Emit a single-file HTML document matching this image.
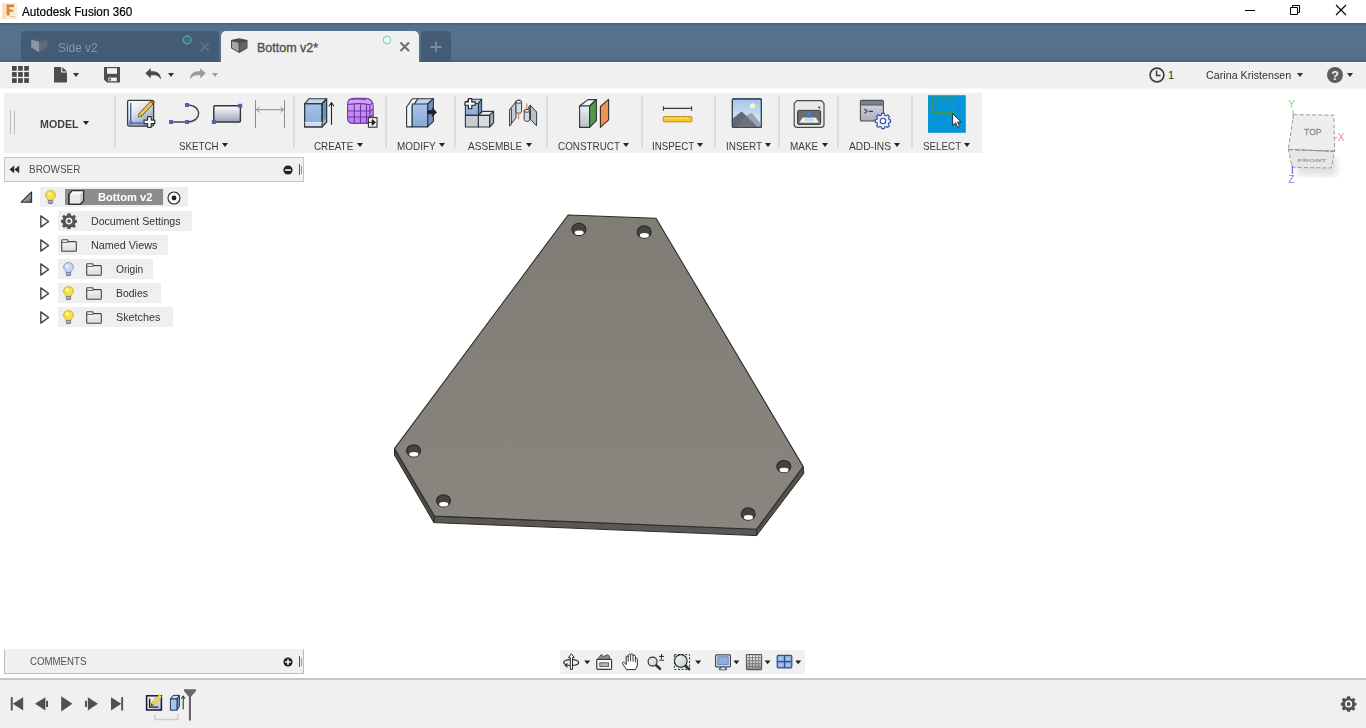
<!DOCTYPE html>
<html>
<head>
<meta charset="utf-8">
<title>Autodesk Fusion 360</title>
<style>
*{box-sizing:border-box;margin:0;padding:0}
html,body{width:1366px;height:728px;overflow:hidden;background:#fff;font-family:"Liberation Sans",sans-serif;}
.abs{position:absolute}
#titlebar{position:absolute;left:0;top:0;width:1366px;height:23px;background:#fff}
#titletext{-webkit-text-stroke:0.2px #000;position:absolute;left:22px;top:5px;font-size:12px;transform:scaleX(.978);transform-origin:0 0;line-height:15px;color:#000;white-space:nowrap}
#tabbar{z-index:2;position:absolute;left:0;top:23px;width:1366px;height:39px;background:linear-gradient(#4b6078 0,#4b6078 1px,#55718d 2px,#56728e 20px,#526e89 37px,#4a6079 38px,#4a6079 39px)}
#tab1{position:absolute;left:21px;top:8px;width:198px;height:31px;background:#435b74;border-radius:4px 4px 0 0}
#tab2{position:absolute;left:221px;top:8px;width:198px;height:32px;background:#f0f0f0;border-radius:5px 5px 0 0}
#tabplus{position:absolute;left:421px;top:8px;width:30px;height:31px;background:#435b74;border-radius:4px 4px 0 0}
.tabtxt{position:absolute;top:10px;font-size:12.5px;line-height:15px;white-space:nowrap}
.qtxt{position:absolute;top:6.5px;font-size:11px;line-height:13px;color:#333;white-space:nowrap}
#qat{position:absolute;left:0;top:62px;width:1366px;height:27px;background:linear-gradient(#f8fafc 0,#f8fafc 1px,#f0f0f0 1px,#f0f0f0 26px,#f7f7f7 26px)}
#ribbon{position:absolute;left:4px;top:93px;width:978px;height:60px;background:#f0f0f0}
.sep{position:absolute;top:3px;width:2px;height:52px;background:#dddddd}
.rlabel{position:absolute;top:46.7px;font-size:11px;line-height:13px;color:#3c3c3c;white-space:nowrap}
.dd{position:absolute;width:0;height:0;border-left:3.5px solid transparent;border-right:3.5px solid transparent;border-top:4px solid #222}
#browserhdr{position:absolute;left:4px;top:157px;width:300px;height:25px;background:#f0f0f0;border:1px solid #c4c4c4}
.ptitle{position:absolute;font-size:11px;line-height:13px;color:#505050;white-space:nowrap}
.row{position:absolute;height:20px;background:#efeff1}
.rtxt{position:absolute;font-size:11px;line-height:13px;color:#333;white-space:nowrap}
#comments{position:absolute;left:4px;top:649px;width:300px;height:25px;background:#f0f0f0;border:1px solid #bcbcbc;border-top-color:#f0f0f0}
#navbar{position:absolute;left:560px;top:650px;width:245px;height:24px;background:#f0f0f0}
#botline{position:absolute;left:0;top:678px;width:1366px;height:2px;background:#c6c6c6}
#timeline{position:absolute;left:0;top:680px;width:1366px;height:48px;background:#f0f0f0}
svg{position:absolute;overflow:visible}
</style>
</head>
<body>
<div id="titlebar">
  <svg style="left:2px;top:3px" width="15" height="16" viewBox="0 0 15 16">
    <rect x="0" y="0" width="15" height="16" rx="1.5" fill="#fdebd9"/>
    <rect x="0" y="0" width="4" height="16" fill="#fbd9b8" opacity=".7"/>
    <path d="M4.6 1.8 H12 V4.3 H7.6 V6.4 H11.2 V8.8 H7.6 V12.4 H4.6 Z" fill="#d98a35"/>
    <path d="M4.6 1.8 H12 V3 H4.6 Z" fill="#c9792a"/>
    <rect x="8" y="13.2" width="5" height="1" fill="#e8b98a"/>
  </svg>
  <div id="titletext">Autodesk Fusion 360</div>
  <svg style="left:1240px;top:0" width="120" height="23" viewBox="0 0 120 23">
    <path d="M5 10.5 H15" stroke="#000" stroke-width="1" fill="none"/>
    <path d="M50.5 7.5 H57.5 V14.5 H50.5 Z M52.5 7.5 V5.5 H59.5 V12.5 H57.5" stroke="#000" stroke-width="1" fill="none"/>
    <path d="M96 5 L106 15 M106 5 L96 15" stroke="#000" stroke-width="1.1" fill="none"/>
  </svg>
</div>
<div id="tabbar">
  <div id="tab1">
    <svg style="left:10px;top:6px" width="17" height="16" viewBox="0 0 17 16">
      <path d="M0.2 2.6 L8 4.6 L8 15.2 L0.2 10.6 Z" fill="#8797a7"/>
      <path d="M8 4.6 L16.3 2.4 L16.3 10.4 L8 15.2 Z" fill="#5b6a7c"/>
      <path d="M0.2 2.6 L8 1 L16.3 2.4 L8 4.6 Z" fill="#4c5f75"/>
    </svg>
    <div class="tabtxt" style="left:36.5px;color:#8399ad;transform:scaleX(.95);transform-origin:0 0">Side v2</div>
    <svg style="left:160px;top:3px" width="12" height="12" viewBox="0 0 12 12"><circle cx="6.1" cy="5.9" r="3.8" fill="#2f6e7a" stroke="#5b9ca2" stroke-width="1.5"/><circle cx="6.1" cy="5.9" r="0.9" fill="#3f7f88"/></svg>
    <svg style="left:178px;top:10px" width="12" height="12" viewBox="0 0 12 12"><path d="M1.5 1.5 L10 10 M10 1.5 L1.5 10" stroke="#5d7084" stroke-width="2.2" fill="none"/></svg>
  </div>
  <div id="tab2">
    <svg style="left:9.8px;top:6.5px" width="17" height="16" viewBox="0 0 17 16">
      <path d="M0 2 L8 0.3 L16.5 2 L16.5 10.2 L8.3 15 L0 10.2 Z" fill="#4c4c4c"/>
      <path d="M1 3.4 L7.6 4.8 L7.6 13.4 L1 9.7 Z" fill="#a6a6a6"/>
      <path d="M8.8 4.9 L15.6 3.4 L15.6 9.7 L8.8 13.5 Z" fill="#646464"/>
    </svg>
    <div class="tabtxt" style="left:36px;color:#505050;-webkit-text-stroke:0.35px #505050">Bottom v2*</div>
    <svg style="left:160px;top:3px" width="12" height="12" viewBox="0 0 12 12"><circle cx="6" cy="6" r="3.6" fill="#f6fbfa" stroke="#7fd1c0" stroke-width="1.2"/></svg>
    <svg style="left:178px;top:10px" width="12" height="12" viewBox="0 0 12 12"><path d="M1.5 1.5 L10 10 M10 1.5 L1.5 10" stroke="#6c6c6c" stroke-width="2" fill="none"/></svg>
  </div>
  <div id="tabplus">
    <svg style="left:9px;top:10px" width="12" height="12" viewBox="0 0 12 12"><path d="M6 0.5 V11.5 M0.5 6 H11.5" stroke="#7a8da2" stroke-width="1.8" fill="none"/></svg>
  </div>
</div>
<div id="qat">
  <!-- grid -->
  <svg style="left:12px;top:4px" width="17" height="17" viewBox="0 0 17 17" fill="#484848">
    <rect x="0" y="0" width="4.7" height="4.7"/><rect x="6.1" y="0" width="4.7" height="4.7"/><rect x="12.2" y="0" width="4.7" height="4.7"/>
    <rect x="0" y="6.1" width="4.7" height="4.7"/><rect x="6.1" y="6.1" width="4.7" height="4.7"/><rect x="12.2" y="6.1" width="4.7" height="4.7"/>
    <rect x="0" y="12.2" width="4.7" height="4.7"/><rect x="6.1" y="12.2" width="4.7" height="4.7"/><rect x="12.2" y="12.2" width="4.7" height="4.7"/>
  </svg>
  <!-- file -->
  <svg style="left:54px;top:5px" width="13" height="16" viewBox="0 0 13 16"><path d="M0 0 H7.2 V5.6 H13 V15.6 H0 Z M8.4 0 L13 4.5 H8.4 Z" fill="#4d4d4d"/></svg>
  <div class="dd" style="left:73px;top:11px;border-top-color:#333"></div>
  <!-- save -->
  <svg style="left:104px;top:5px" width="16" height="16" viewBox="0 0 16 16">
    <path d="M0 0 H16 V15.6 H3 L0 12.8 Z" fill="#4d4d4d"/>
    <rect x="3" y="1.2" width="10" height="5.6" fill="#f0f0f0"/>
    <rect x="4.4" y="10.6" width="8.4" height="3.6" fill="#f0f0f0"/>
    <rect x="5.4" y="11.4" width="1.6" height="2.2" fill="#4d4d4d"/>
  </svg>
  <!-- undo -->
  <svg style="left:145px;top:6px" width="17" height="12" viewBox="0 0 17 12">
    <path d="M0.3 5.2 L5.8 0.2 V3.2 C10.5 3 15.6 4 15.9 11 L15.2 11 C14 7.6 10.5 7.2 5.8 7.3 V10.3 Z" fill="#4a4a4a"/>
  </svg>
  <div class="dd" style="left:168px;top:11px;border-top-color:#333"></div>
  <!-- redo -->
  <svg style="left:188.5px;top:6px" width="17" height="12" viewBox="0 0 17 12">
    <path d="M16.7 5.2 L11.2 0.2 V3.2 C6.5 3 1.4 4 1.1 11 L1.8 11 C3 7.6 6.5 7.2 11.2 7.3 V10.3 Z" fill="#9a9a9a"/>
  </svg>
  <div class="dd" style="left:212px;top:11px;border-top-color:#a0a0a0"></div>
  <!-- right side -->
  <svg style="left:1149px;top:4.5px" width="16" height="16" viewBox="0 0 16 16">
    <circle cx="8" cy="8" r="6.9" fill="none" stroke="#3c3c3c" stroke-width="1.6"/>
    <path d="M7.6 3.6 V8.6 H11.6" stroke="#3c3c3c" stroke-width="1.5" fill="none"/>
  </svg>
  <div class="qtxt" style="left:1168px">1</div>
  <div class="qtxt" style="left:1206px;transform:scaleX(.975);transform-origin:0 0">Carina Kristensen</div>
  <div class="dd" style="left:1297px;top:11px;border-top-color:#333;border-left-width:3px;border-right-width:3px"></div>
  <svg style="left:1327px;top:4.5px" width="16" height="16" viewBox="0 0 16 16">
    <circle cx="8" cy="8" r="8" fill="#5e5e5e"/>
    <text x="8" y="12.6" text-anchor="middle" font-family="Liberation Sans" font-weight="bold" font-size="12.5" fill="#f0f0f0">?</text>
  </svg>
  <div class="dd" style="left:1347px;top:11px;border-top-color:#333;border-left-width:3px;border-right-width:3px"></div>
</div>
<div id="ribbon">
  <div class="abs" style="left:6px;top:17px;width:1px;height:24px;background:#bdbdbd"></div><div class="abs" style="left:10px;top:17px;width:1px;height:24px;background:#bdbdbd"></div>
  <div class="abs" style="left:36.2px;top:24.7px;font-size:11px;line-height:13px;font-weight:bold;color:#404040;transform:scaleX(.97);transform-origin:0 0">MODEL</div>
  <div class="dd" style="left:79px;top:28.2px;border-left-width:3px;border-right-width:3px"></div>
  <div class="sep" style="left:110px"></div>
  <div class="sep" style="left:289px"></div>
  <div class="sep" style="left:381px"></div>
  <div class="sep" style="left:450px"></div>
  <div class="sep" style="left:542px"></div>
  <div class="sep" style="left:636.5px"></div>
  <div class="sep" style="left:710px"></div>
  <div class="sep" style="left:774px"></div>
  <div class="sep" style="left:833px"></div>
  <div class="sep" style="left:907px"></div>
  <div class="rlabel" style="left:175.4px;transform:scaleX(0.886);transform-origin:0 0">SKETCH</div>
  <div class="dd" style="left:218.0px;top:49.9px;border-left-width:3px;border-right-width:3px"></div>
  <div class="rlabel" style="left:310.0px;transform:scaleX(0.895);transform-origin:0 0">CREATE</div>
  <div class="dd" style="left:353.0px;top:49.9px;border-left-width:3px;border-right-width:3px"></div>
  <div class="rlabel" style="left:393.0px;transform:scaleX(0.902);transform-origin:0 0">MODIFY</div>
  <div class="dd" style="left:435.0px;top:49.9px;border-left-width:3px;border-right-width:3px"></div>
  <div class="rlabel" style="left:464.2px;transform:scaleX(0.916);transform-origin:0 0">ASSEMBLE</div>
  <div class="dd" style="left:522.0px;top:49.9px;border-left-width:3px;border-right-width:3px"></div>
  <div class="rlabel" style="left:554.0px;transform:scaleX(0.897);transform-origin:0 0">CONSTRUCT</div>
  <div class="dd" style="left:619.0px;top:49.9px;border-left-width:3px;border-right-width:3px"></div>
  <div class="rlabel" style="left:648.2px;transform:scaleX(0.887);transform-origin:0 0">INSPECT</div>
  <div class="dd" style="left:693.0px;top:49.9px;border-left-width:3px;border-right-width:3px"></div>
  <div class="rlabel" style="left:721.9px;transform:scaleX(0.900);transform-origin:0 0">INSERT</div>
  <div class="dd" style="left:760.5px;top:49.9px;border-left-width:3px;border-right-width:3px"></div>
  <div class="rlabel" style="left:786.3px;transform:scaleX(0.904);transform-origin:0 0">MAKE</div>
  <div class="dd" style="left:817.5px;top:49.9px;border-left-width:3px;border-right-width:3px"></div>
  <div class="rlabel" style="left:845.0px;transform:scaleX(0.929);transform-origin:0 0">ADD-INS</div>
  <div class="dd" style="left:889.5px;top:49.9px;border-left-width:3px;border-right-width:3px"></div>
  <div class="rlabel" style="left:919.2px;transform:scaleX(0.893);transform-origin:0 0">SELECT</div>
  <div class="dd" style="left:960.0px;top:49.9px;border-left-width:3px;border-right-width:3px"></div>
<svg style="left:-4px;top:-93px" width="990" height="160" viewBox="0 0 990 160">
<defs>
  <linearGradient id="gSk" x1="0" y1="0" x2="0.6" y2="1"><stop offset="0" stop-color="#ffffff"/><stop offset="0.45" stop-color="#e4e7ee"/><stop offset="1" stop-color="#8fa0c4"/></linearGradient>
  <linearGradient id="gRect" x1="0" y1="0" x2="0" y2="1"><stop offset="0" stop-color="#ffffff"/><stop offset="1" stop-color="#9aa1b8"/></linearGradient>
  <linearGradient id="gBlueF" x1="0" y1="0" x2="0" y2="1"><stop offset="0" stop-color="#a6c4e8"/><stop offset="1" stop-color="#86a9d6"/></linearGradient>
  <linearGradient id="gPurp" x1="0" y1="0" x2="0" y2="1"><stop offset="0" stop-color="#d7a6f5"/><stop offset="1" stop-color="#b77de8"/></linearGradient>
  <linearGradient id="gGrey" x1="0" y1="0" x2="0" y2="1"><stop offset="0" stop-color="#eef0f3"/><stop offset="1" stop-color="#b9bec8"/></linearGradient>
  <linearGradient id="gSky" x1="0" y1="0" x2="0" y2="1"><stop offset="0" stop-color="#9fc6ea"/><stop offset="1" stop-color="#e6f0f8"/></linearGradient>
  <linearGradient id="gTerm" x1="0" y1="0" x2="0" y2="1"><stop offset="0" stop-color="#d9dce6"/><stop offset="1" stop-color="#a9adbb"/></linearGradient>
</defs>
<!-- create sketch -->
<g>
  <rect x="127.6" y="100.3" width="26" height="25.8" rx="1.5" fill="url(#gSk)" stroke="#3a3a3a" stroke-width="1.3"/>
  <path d="M130.7 103 V123.2 H143" stroke="#3f5f9a" stroke-width="1.3" fill="none"/>
  <rect x="129.3" y="121.4" width="3.2" height="3.2" fill="#4d76c0"/>
  <path d="M139.2 113.6 L150.6 101.4 L153.2 103.8 L141.8 116 L138.6 116.8 Z" fill="#f2c74a" stroke="#5a4320" stroke-width="0.9"/>
  <path d="M150.6 101.4 L152 100 L154.6 102.4 L153.2 103.8 Z" fill="#b0662c" stroke="#5a4320" stroke-width="0.8"/>
  <path d="M139.2 113.6 L141.8 116 L138.4 117 Z" fill="#f4ead8" stroke="#5a4320" stroke-width="0.6"/>
  <path d="M147.6 116.6 H151.2 V120.1 H154.8 V123.7 H151.2 V127.3 H147.6 V123.7 H144 V120.1 H147.6 Z" fill="#fff" stroke="#333" stroke-width="1.2" stroke-linejoin="round"/>
</g>
<!-- line arc -->
<g>
  <path d="M171 122 H187 C202.5 122 202.5 105 187 105" stroke="#444" stroke-width="1.4" fill="none"/>
  <rect x="169" y="120" width="4" height="4" fill="#4d62b8"/><rect x="185" y="120" width="4" height="4" fill="#4d62b8"/><rect x="185" y="103" width="4" height="4" fill="#4d62b8"/>
</g>
<!-- rectangle -->
<g>
  <rect x="213.8" y="105.8" width="26.6" height="16.2" rx="1" fill="url(#gRect)" stroke="#333" stroke-width="1.4"/>
  <rect x="211.8" y="120" width="4" height="4" fill="#4d62b8"/><rect x="238.2" y="103.8" width="4" height="4" fill="#4d62b8"/>
</g>
<!-- dimension -->
<g stroke="#8c8c8c" stroke-width="1" fill="none">
  <path d="M255.5 100 V128 M284.5 100 V128 M256 109.7 H284 M259.5 107 L256.5 109.7 L259.5 112.4 M280.5 107 L283.5 109.7 L280.5 112.4"/>
</g>
<!-- extrude -->
<g stroke="#2f3640" stroke-width="1.1" stroke-linejoin="round">
  <path d="M304.6 103.8 L309 98.7 H326.6 L322 103.8 Z" fill="#c2d6ee"/>
  <path d="M322 103.8 L326.6 98.7 V122 L322 126.9 Z" fill="#6f8fbd"/>
  <rect x="304.6" y="103.8" width="17.4" height="23.1" fill="url(#gBlueF)"/>
  <path d="M304.6 122.6 H322 V126.9 H304.6 Z" fill="#d4dde8" stroke="none"/>
  <path d="M322 122.6 L326.6 117.8 V122 L322 126.9 Z" fill="#aeb9c8" stroke="none"/>
  <path d="M304.6 103.8 H322 V126.9 H304.6 Z M322 103.8 L326.6 98.7 V122 L322 126.9" fill="none"/>
  <path d="M304.6 122.6 H322" stroke="#f4f6f9" stroke-width="0.8"/>
</g>
<path d="M331.5 124.8 V103.5 M329 106.2 L331.5 102.6 L334 106.2" stroke="#222" stroke-width="1.1" fill="none"/>
<!-- form -->
<g>
  <path d="M347.6 104 C347.6 100 350 98.4 354 98.4 H365 C371 98.4 373.2 102 373.2 107 V117 C373.2 121 371 123.4 367 123.4 H353 C349 123.4 347.6 121 347.6 118 Z" fill="url(#gPurp)" stroke="#7b3fb5" stroke-width="1.2"/>
  <path d="M348 104.5 C356 103.3 364 103.3 369.5 104.8 M347.8 111 H370 M347.8 117 H370 M354.3 104 V123 M360.5 103.6 V123 M366.5 104 V123 M369.8 105 V122.5 M351 99.3 C356 98.8 362 98.8 366 100 M369.8 105 C371.5 104 372.5 103 372.8 102.5 M370 111 L373 109.5 M370 117 L373 115" stroke="#6f35a8" stroke-width="1.1" fill="none"/>
  <rect x="368.4" y="117.6" width="8.6" height="9.6" fill="#f4f4f4" stroke="#333" stroke-width="1.1"/>
  <path d="M368.6 122.4 H373 M372.2 119.6 L375.4 122.4 L372.2 125.2 Z" fill="#222" stroke="#222" stroke-width="1"/>
</g>
<!-- press pull -->
<g stroke="#2f3640" stroke-width="1.1" stroke-linejoin="round">
  <path d="M406.6 107 L412.4 98.7 H418 L412.2 107 V126.9 H406.6 Z" fill="#f2f4f7"/>
  <path d="M412.2 107 L418 98.7 H433.4 L427.6 104 Z" fill="#c2d6ee"/>
  <path d="M427.6 104 L433.4 98.7 V121.4 L427.6 126.9 Z" fill="#6f8fbd"/>
  <rect x="412.2" y="104" width="15.4" height="22.9" fill="url(#gBlueF)"/>
</g>
<path d="M427.6 110.6 H432.4 V108 L436.6 112.2 L432.4 116.4 V113.8 H427.6 Z" fill="#222" stroke="#222" stroke-width="0.8" stroke-linejoin="round"/>
<!-- new component -->
<g stroke="#2f3640" stroke-width="1.1" stroke-linejoin="round">
  <path d="M465.4 103.6 L469 99.2 H481.6 L478.4 103.6 Z" fill="#c2d6ee"/>
  <path d="M478.4 103.6 L481.6 99.2 V111.6 L478.4 115.4 Z" fill="#6f8fbd"/>
  <rect x="465.4" y="103.6" width="13" height="11.8" fill="url(#gBlueF)"/>
  <rect x="465.4" y="115.4" width="13" height="11.6" fill="#c9ccd3"/>
  <path d="M478.4 115.4 L482.6 111.4 H493.6 L489.6 115.4 Z" fill="#eef0f4"/>
  <path d="M489.6 115.4 L493.6 111.4 V122.8 L489.6 127 Z" fill="#a9adb8"/>
  <rect x="478.4" y="115.4" width="11.2" height="11.6" fill="#d9dbe1"/>
  <path d="M468.4 98.6 H471.8 V101.9 H475.2 V105.3 H471.8 V108.8 H468.4 V105.3 H465 V101.9 H468.4 Z" fill="#fff" stroke="#222" stroke-width="1.1"/>
</g>
<!-- joint -->
<g stroke="#3a3f48" stroke-width="1" stroke-linejoin="round">
  <path d="M509.6 109.6 L516 101.6 V117.8 L509.6 126 Z" fill="#c4c9d2"/>
  <path d="M509.6 109.6 L511.4 108.4 V124.6 L509.6 126 Z" fill="#eef0f4"/>
  <path d="M516 101.8 C516 99.6 521.6 99.6 521.6 101.8 V111.6 C521.6 113.8 516 113.8 516 111.6 Z" fill="#d5d9e0"/>
  <ellipse cx="518.8" cy="101.8" rx="2.8" ry="1.5" fill="#f4f5f7"/>
  <path d="M530.4 105.2 L536.6 112 V126 L530.4 119.2 Z" fill="#b9bec8"/>
  <path d="M530.4 105.2 L528.8 106.6 V120.6 L530.4 119.2 Z" fill="#8e949f"/>
  <path d="M524.2 110.8 C524.2 108.8 529.6 108.8 529.6 110.8 V119.8 C529.6 121.8 524.2 121.8 524.2 119.8 Z" fill="#d5d9e0"/>
  <ellipse cx="526.9" cy="110.8" rx="2.7" ry="1.4" fill="#f4f5f7"/>
</g>
<path d="M518.6 113.6 V119.4 M526.8 103.4 V109" stroke="#e0762a" stroke-width="1" fill="none"/>
<!-- construct -->
<g stroke="#2f3640" stroke-width="1.1" stroke-linejoin="round">
  <path d="M579.6 106 L588 99.6 H596.4 L589.6 106 Z" fill="#f1f3f5"/>
  <rect x="579.6" y="106" width="10" height="21.4" fill="url(#gGrey)"/>
  <path d="M589.6 106 L596.4 99.6 V120.6 L589.6 127.4 Z" fill="#4f9a46"/>
  <path d="M600.4 106.4 L608.6 99.4 V119.8 L600.4 127.4 Z" fill="#ee9257" stroke="#3a2a20"/>
</g>
<!-- inspect -->
<path d="M663.4 108.4 H691.6 M663.4 106.2 V110.8 M691.6 106.2 V110.8" stroke="#3a3a3a" stroke-width="1.1" fill="none"/>
<rect x="663.2" y="116.6" width="28.6" height="5.2" rx="1" fill="#f7c52d" stroke="#c08a10" stroke-width="1"/>
<path d="M666 117 V119 M668.4 117 V119 M670.8 117 V119 M673.2 117 V119 M675.6 117 V119 M678 117 V119 M680.4 117 V119 M682.8 117 V119 M685.2 117 V119 M687.6 117 V119" stroke="#fbe9a6" stroke-width="0.9"/>
<!-- insert -->
<g>
  <rect x="732.4" y="98.8" width="29" height="28.6" rx="1" fill="url(#gSky)" stroke="#3c4452" stroke-width="1.2"/>
  <path d="M745 116 L752 113 L761 124 V127 H745 Z" fill="#9aa5b3"/>
  <path d="M733 118.4 L741.6 111.6 L757.4 126.8 H733 Z" fill="#6b717d"/>
  <path d="M741.6 111.6 L746 116 L742 120 L738 126.8 H733 V118.4 Z" fill="#5d636f" opacity=".6"/>
  <circle cx="752.6" cy="105.8" r="2.6" fill="#fbf5c8"/>
  <rect x="732.4" y="98.8" width="29" height="28.6" rx="1" fill="none" stroke="#3c4452" stroke-width="1.2"/>
</g>
<!-- make -->
<g>
  <path d="M797 100.6 H821.4 L824 103.4 V124.6 C824 126.4 823 127.4 821.4 127.4 H797 C795.2 127.4 794.2 126.4 794.2 124.6 V103.4 Z" fill="#e9e9ea" stroke="#4a4a4a" stroke-width="1.2"/>
  <rect x="797.6" y="110.4" width="23" height="14" rx="1" fill="#6a6c70" stroke="#3a3a3a" stroke-width="1"/>
  <path d="M802.6 117.8 H815.8 L818.8 122.6 H799.6 Z" fill="#f4f4f4" stroke="#d0d0d0" stroke-width=".5"/>
  <path d="M805.2 118.6 H813.2 L814.6 121 H804 Z" fill="#c9d6e6"/>
  <path d="M807.6 111 H810.8 V115.2 L809.2 118.2 L807.6 115.2 Z" fill="#3f7fd0"/>
  <rect x="818.4" y="106.6" width="1.8" height="1.8" fill="#333"/>
</g>
<!-- add-ins -->
<g>
  <rect x="860.4" y="100.4" width="23" height="20.6" rx="1" fill="url(#gTerm)" stroke="#4a4d55" stroke-width="1.1"/>
  <rect x="860.9" y="101" width="22" height="3.8" fill="#7d808a"/>
  <path d="M860.4 105 H883.4" stroke="#4a4d55" stroke-width="1"/>
  <path d="M864.4 109 L867.4 111.2 L864.4 113.4 M869 111.4 H873" stroke="#3a3d45" stroke-width="1.1" fill="none"/>
  <g transform="translate(883,120.6)">
    <path d="M-1.3 -7.2 H1.3 L1.7 -5.4 L3.3 -4.7 L4.9 -5.8 L6.6 -4 L5.5 -2.5 L6.1 -1 L7.6 -0.7 V1.8 L6 2.1 L5.4 3.6 L6.4 5.1 L4.6 6.9 L3.1 5.8 L1.6 6.4 L1.2 8 H-1.3 L-1.7 6.4 L-3.2 5.8 L-4.7 6.8 L-6.5 5 L-5.5 3.5 L-6.1 2 L-7.7 1.7 V-0.8 L-6.1 -1.1 L-5.5 -2.6 L-6.5 -4.1 L-4.7 -5.9 L-3.2 -4.8 L-1.7 -5.4 Z" fill="#e8eefc" stroke="#2f4f9e" stroke-width="1.1" stroke-linejoin="round"/>
    <circle cx="0" cy="0.4" r="2.7" fill="#fff" stroke="#2f4f9e" stroke-width="1.1"/>
  </g>
</g>
<!-- select -->
<g>
  <rect x="928" y="95.2" width="37.8" height="37.6" fill="#0696d7"/>
  <rect x="932.2" y="99" width="21.4" height="13.6" fill="none" stroke="#4a9c3a" stroke-width="1.1"/>
  <path d="M952.6 113.4 V125.6 L955.6 122.8 L957.6 127.4 L959.6 126.4 L957.6 122 H961.2 Z" fill="#fff" stroke="#2a2a2a" stroke-width="1" stroke-linejoin="round"/>
</g>

</svg>
</div>
<div id="browserhdr">
  <svg style="left:4px;top:7px" width="12" height="9" viewBox="0 0 12 9"><path d="M0.4 4.4 L5.2 0.6 V8.2 Z M5.4 4.4 L10.2 0.6 V8.2 Z" fill="#2a2a2a"/></svg>
  <div class="ptitle" style="left:23.8px;top:5px;transform:scaleX(.905);transform-origin:0 0">BROWSER</div>
  <svg style="left:278px;top:6.5px" width="10" height="10" viewBox="0 0 10 10"><circle cx="5" cy="5" r="4.6" fill="#222"/><rect x="2.2" y="4.2" width="5.6" height="1.6" fill="#fff"/></svg>
  <div class="abs" style="left:294px;top:6px;width:1px;height:11px;background:#555"></div>
  <div class="abs" style="left:296px;top:8px;width:1px;height:8px;background:#999"></div>
</div>
<div class="row" style="left:40px;top:187px;width:148px;height:20px"></div>
<svg style="left:20px;top:191px" width="13" height="12" viewBox="0 0 13 12"><defs><linearGradient id="gT" x1="0" y1="0" x2="1" y2="1"><stop offset="0.3" stop-color="#d0d0d0"/><stop offset="1" stop-color="#555"/></linearGradient></defs><path d="M11.6 1 V11.2 H1.2 Z" fill="url(#gT)" stroke="#2a2a2a" stroke-width="1.1" stroke-linejoin="round"/></svg>
<svg style="left:45.4px;top:189.8px" width="11" height="15" viewBox="0 0 11 15"><path d="M5.5 0.6 C2.6 0.6 0.6 2.7 0.6 5.2 C0.6 7 1.7 8.2 2.8 9.2 L3.2 10.4 H7.8 L8.2 9.2 C9.3 8.2 10.4 7 10.4 5.2 C10.4 2.7 8.4 0.6 5.5 0.6 Z" fill="#f5e04a" stroke="#c9a820" stroke-width="0.9"/><ellipse cx="4.4" cy="4" rx="2" ry="1.8" fill="#fdf6a8" opacity=".8"/><rect x="3.3" y="10.4" width="4.4" height="3.2" rx="0.8" fill="#8a8fa8" stroke="#5a5f80" stroke-width="0.7"/><rect x="3.6" y="11.1" width="3.8" height="1" fill="#c9cbe0"/></svg>
<div class="abs" style="left:65px;top:189px;width:98px;height:16px;background:#8c8c8c"></div>
<svg style="left:68px;top:189.6px" width="17" height="15" viewBox="0 0 17 15"><path d="M1 4.4 L4 0.8 H15.6 V10.6 L12.4 14.2 H1 Z" fill="#e9e9e9" stroke="#2a2a2a" stroke-width="1.1" stroke-linejoin="round"/><path d="M1 4.4 L4 0.8 H15.6 L12.4 4.4 Z" fill="#fafafa"/><path d="M12.4 4.4 L15.6 0.8 V10.6 L12.4 14.2 Z" fill="#c8c8c8"/><path d="M1 4.4 L4 0.8 H15.6 V10.6 L12.4 14.2 H1 Z" fill="none" stroke="#2a2a2a" stroke-width="1.1" stroke-linejoin="round"/></svg>
<div class="rtxt" style="left:98.2px;top:190.6px;color:#fff;font-weight:bold;transform:scaleX(1.012);transform-origin:0 0">Bottom v2</div>
<svg style="left:166.5px;top:190.5px" width="14" height="14" viewBox="0 0 14 14"><circle cx="7" cy="7" r="6" fill="#fdfdfd" stroke="#2a2a2a" stroke-width="1.1"/><circle cx="7" cy="7" r="2.4" fill="#222"/></svg>
<div class="row" style="left:58px;top:211px;width:134px;height:19.5px"></div>
<svg style="left:40px;top:215px" width="10" height="13" viewBox="0 0 10 13"><path d="M0.8 0.9 L8.6 6.5 L0.8 12.1 Z" fill="#f4f4f4" stroke="#3a3a3a" stroke-width="1.3" stroke-linejoin="round"/></svg>
<svg style="left:61px;top:213px" width="16" height="16" viewBox="-8 -8 16 16"><path d="M-1.5 -7.8 H1.5 L1.9 -5.7 L3.4 -5 L5.2 -6.2 L7 -4.3 L5.8 -2.6 L6.4 -1.2 L8 -0.9 V1.7 L6.4 2 L5.8 3.5 L6.9 5.2 L5 7 L3.3 5.8 L1.9 6.4 L1.5 8 H-1.5 L-1.9 6.4 L-3.4 5.8 L-5.1 6.9 L-6.9 5.1 L-5.8 3.4 L-6.4 2 L-8 1.6 V-1 L-6.4 -1.3 L-5.8 -2.7 L-6.9 -4.4 L-5.1 -6.2 L-3.4 -5.1 L-1.9 -5.7 Z" fill="#555"/><circle cx="0" cy="0.1" r="3.4" fill="#f0f0f0"/><circle cx="0" cy="0.1" r="1.9" fill="#555"/></svg>
<div class="rtxt" style="left:91.3px;top:214.6px;transform:scaleX(.963);transform-origin:0 0">Document Settings</div>
<div class="row" style="left:58px;top:235px;width:110px;height:19.7px"></div>
<svg style="left:40px;top:238.8px" width="10" height="13" viewBox="0 0 10 13"><path d="M0.8 0.9 L8.6 6.5 L0.8 12.1 Z" fill="#f4f4f4" stroke="#3a3a3a" stroke-width="1.3" stroke-linejoin="round"/></svg>
<svg style="left:60.6px;top:239.2px" width="16" height="13" viewBox="0 0 16 13"><defs><linearGradient id="gF" x1="0" y1="0" x2="0" y2="1"><stop offset="0" stop-color="#fbfbfc"/><stop offset="1" stop-color="#d9dadd"/></linearGradient></defs><path d="M0.7 1.6 C0.7 1 1 0.7 1.6 0.7 H6.2 C6.8 0.7 7.1 1 7.1 1.6 V2.6 H14.4 C15 2.6 15.3 2.9 15.3 3.5 V11.4 C15.3 12 15 12.3 14.4 12.3 H1.6 C1 12.3 0.7 12 0.7 11.4 Z" fill="url(#gF)" stroke="#444" stroke-width="1.1"/><path d="M0.9 3.4 H7.1" stroke="#555" stroke-width="0.9"/></svg>
<div class="rtxt" style="left:91.3px;top:238.6px;transform:scaleX(.982);transform-origin:0 0">Named Views</div>
<div class="row" style="left:58px;top:259px;width:94.7px;height:19.7px"></div>
<svg style="left:40px;top:262.8px" width="10" height="13" viewBox="0 0 10 13"><path d="M0.8 0.9 L8.6 6.5 L0.8 12.1 Z" fill="#f4f4f4" stroke="#3a3a3a" stroke-width="1.3" stroke-linejoin="round"/></svg>
<svg style="left:62.8px;top:261.6px" width="11" height="15" viewBox="0 0 11 15"><path d="M5.5 0.6 C2.6 0.6 0.6 2.7 0.6 5.2 C0.6 7 1.7 8.2 2.8 9.2 L3.2 10.4 H7.8 L8.2 9.2 C9.3 8.2 10.4 7 10.4 5.2 C10.4 2.7 8.4 0.6 5.5 0.6 Z" fill="#c7d6f5" stroke="#7f96c8" stroke-width="0.9"/><ellipse cx="4.4" cy="4" rx="2" ry="1.8" fill="#eef3fd" opacity=".8"/><rect x="3.3" y="10.4" width="4.4" height="3.2" rx="0.8" fill="#8a8fa8" stroke="#5a5f80" stroke-width="0.7"/><rect x="3.6" y="11.1" width="3.8" height="1" fill="#c9cbe0"/></svg>
<svg style="left:85.6px;top:263.2px" width="16" height="13" viewBox="0 0 16 13"><defs><linearGradient id="gF" x1="0" y1="0" x2="0" y2="1"><stop offset="0" stop-color="#fbfbfc"/><stop offset="1" stop-color="#d9dadd"/></linearGradient></defs><path d="M0.7 1.6 C0.7 1 1 0.7 1.6 0.7 H6.2 C6.8 0.7 7.1 1 7.1 1.6 V2.6 H14.4 C15 2.6 15.3 2.9 15.3 3.5 V11.4 C15.3 12 15 12.3 14.4 12.3 H1.6 C1 12.3 0.7 12 0.7 11.4 Z" fill="url(#gF)" stroke="#444" stroke-width="1.1"/><path d="M0.9 3.4 H7.1" stroke="#555" stroke-width="0.9"/></svg>
<div class="rtxt" style="left:116.3px;top:262.6px;transform:scaleX(0.928);transform-origin:0 0">Origin</div>
<div class="row" style="left:58px;top:283px;width:102.8px;height:19.7px"></div>
<svg style="left:40px;top:286.8px" width="10" height="13" viewBox="0 0 10 13"><path d="M0.8 0.9 L8.6 6.5 L0.8 12.1 Z" fill="#f4f4f4" stroke="#3a3a3a" stroke-width="1.3" stroke-linejoin="round"/></svg>
<svg style="left:62.8px;top:285.6px" width="11" height="15" viewBox="0 0 11 15"><path d="M5.5 0.6 C2.6 0.6 0.6 2.7 0.6 5.2 C0.6 7 1.7 8.2 2.8 9.2 L3.2 10.4 H7.8 L8.2 9.2 C9.3 8.2 10.4 7 10.4 5.2 C10.4 2.7 8.4 0.6 5.5 0.6 Z" fill="#f5e04a" stroke="#c9a820" stroke-width="0.9"/><ellipse cx="4.4" cy="4" rx="2" ry="1.8" fill="#fdf6a8" opacity=".8"/><rect x="3.3" y="10.4" width="4.4" height="3.2" rx="0.8" fill="#8a8fa8" stroke="#5a5f80" stroke-width="0.7"/><rect x="3.6" y="11.1" width="3.8" height="1" fill="#c9cbe0"/></svg>
<svg style="left:85.6px;top:287.2px" width="16" height="13" viewBox="0 0 16 13"><defs><linearGradient id="gF" x1="0" y1="0" x2="0" y2="1"><stop offset="0" stop-color="#fbfbfc"/><stop offset="1" stop-color="#d9dadd"/></linearGradient></defs><path d="M0.7 1.6 C0.7 1 1 0.7 1.6 0.7 H6.2 C6.8 0.7 7.1 1 7.1 1.6 V2.6 H14.4 C15 2.6 15.3 2.9 15.3 3.5 V11.4 C15.3 12 15 12.3 14.4 12.3 H1.6 C1 12.3 0.7 12 0.7 11.4 Z" fill="url(#gF)" stroke="#444" stroke-width="1.1"/><path d="M0.9 3.4 H7.1" stroke="#555" stroke-width="0.9"/></svg>
<div class="rtxt" style="left:116.3px;top:286.6px;transform:scaleX(0.95);transform-origin:0 0">Bodies</div>
<div class="row" style="left:58px;top:307px;width:114.9px;height:19.7px"></div>
<svg style="left:40px;top:310.8px" width="10" height="13" viewBox="0 0 10 13"><path d="M0.8 0.9 L8.6 6.5 L0.8 12.1 Z" fill="#f4f4f4" stroke="#3a3a3a" stroke-width="1.3" stroke-linejoin="round"/></svg>
<svg style="left:62.8px;top:309.6px" width="11" height="15" viewBox="0 0 11 15"><path d="M5.5 0.6 C2.6 0.6 0.6 2.7 0.6 5.2 C0.6 7 1.7 8.2 2.8 9.2 L3.2 10.4 H7.8 L8.2 9.2 C9.3 8.2 10.4 7 10.4 5.2 C10.4 2.7 8.4 0.6 5.5 0.6 Z" fill="#f5e04a" stroke="#c9a820" stroke-width="0.9"/><ellipse cx="4.4" cy="4" rx="2" ry="1.8" fill="#fdf6a8" opacity=".8"/><rect x="3.3" y="10.4" width="4.4" height="3.2" rx="0.8" fill="#8a8fa8" stroke="#5a5f80" stroke-width="0.7"/><rect x="3.6" y="11.1" width="3.8" height="1" fill="#c9cbe0"/></svg>
<svg style="left:85.6px;top:311.2px" width="16" height="13" viewBox="0 0 16 13"><defs><linearGradient id="gF" x1="0" y1="0" x2="0" y2="1"><stop offset="0" stop-color="#fbfbfc"/><stop offset="1" stop-color="#d9dadd"/></linearGradient></defs><path d="M0.7 1.6 C0.7 1 1 0.7 1.6 0.7 H6.2 C6.8 0.7 7.1 1 7.1 1.6 V2.6 H14.4 C15 2.6 15.3 2.9 15.3 3.5 V11.4 C15.3 12 15 12.3 14.4 12.3 H1.6 C1 12.3 0.7 12 0.7 11.4 Z" fill="url(#gF)" stroke="#444" stroke-width="1.1"/><path d="M0.9 3.4 H7.1" stroke="#555" stroke-width="0.9"/></svg>
<div class="rtxt" style="left:116.3px;top:310.6px;transform:scaleX(0.98);transform-origin:0 0">Sketches</div>
<svg id="plate" style="left:0;top:0" width="1366" height="728" viewBox="0 0 1366 728">
<defs>
 <linearGradient id="gTop" x1="0" y1="215" x2="0" y2="530" gradientUnits="userSpaceOnUse"><stop offset="0" stop-color="#807d76"/><stop offset="1" stop-color="#8a867f"/></linearGradient>
</defs>
<path d="M394.5 448.6 L434.5 516.1 L433.9 522.6 L394.5 455.2 Z" fill="#4c4a46" stroke="#2c2b29" stroke-width="1" stroke-linejoin="round"/>
<path d="M434.5 516.1 L756.6 529.2 L756.6 535.6 L433.9 522.6 Z" fill="#5a5853" stroke="#2c2b29" stroke-width="1" stroke-linejoin="round"/>
<path d="M756.6 529.2 L803.2 466.6 L803.8 473.4 L756.6 535.6 Z" fill="#53514c" stroke="#2c2b29" stroke-width="1" stroke-linejoin="round"/>
<path d="M568.1 215 L656 218.2 L803.2 466.6 L756.6 529.2 L434.5 516.1 L394.5 448.6 Z" fill="url(#gTop)" stroke="#2f2e2b" stroke-width="1.1" stroke-linejoin="round"/>
<ellipse cx="578.9" cy="229.4" rx="7" ry="6.1" fill="#444341" stroke="#2a2927" stroke-width="1.1"/><ellipse cx="579.1" cy="232.8" rx="4.5" ry="2.3" fill="#fff"/><ellipse cx="644.2" cy="232" rx="7" ry="6.1" fill="#444341" stroke="#2a2927" stroke-width="1.1"/><ellipse cx="644.4000000000001" cy="235.4" rx="4.5" ry="2.3" fill="#fff"/><ellipse cx="413.6" cy="450.8" rx="7" ry="6.1" fill="#444341" stroke="#2a2927" stroke-width="1.1"/><ellipse cx="413.8" cy="454.2" rx="4.5" ry="2.3" fill="#fff"/><ellipse cx="443.5" cy="500.8" rx="7" ry="6.1" fill="#444341" stroke="#2a2927" stroke-width="1.1"/><ellipse cx="443.7" cy="504.2" rx="4.5" ry="2.3" fill="#fff"/><ellipse cx="783.8" cy="466.6" rx="7" ry="6.1" fill="#444341" stroke="#2a2927" stroke-width="1.1"/><ellipse cx="784.0" cy="470.0" rx="4.5" ry="2.3" fill="#fff"/><ellipse cx="748.2" cy="514" rx="7" ry="6.1" fill="#444341" stroke="#2a2927" stroke-width="1.1"/><ellipse cx="748.4000000000001" cy="517.4" rx="4.5" ry="2.3" fill="#fff"/>
</svg>
<svg id="vc" style="left:1270px;top:95px" width="96" height="95" viewBox="1270 95 96 95">
<defs><filter id="blur"><feGaussianBlur stdDeviation="3"/></filter></defs>
<path d="M1296 158 L1338 158 L1336 176 L1298 175 Z" fill="#c8c8c8" filter="url(#blur)" opacity=".55"/>
<path d="M1293.5 114.6 L1333.9 115.2 L1334.6 151.3 L1288.3 149.5 Z" fill="#eeeeef" stroke="#9c9c9c" stroke-width="1" stroke-dasharray="4 2.2"/>
<path d="M1288.3 149.5 L1334.6 151.3 L1331.3 168 L1292.2 167.4 Z" fill="#e6e6e7" stroke="#9c9c9c" stroke-width="1" stroke-dasharray="4 2.2"/>
<path d="M1288.3 149.5 L1334.6 151.3" stroke="#8a8a8a" stroke-width="1.1" stroke-dasharray="5 2"/>
<text x="1312.8" y="135.2" text-anchor="middle" font-family="Liberation Sans" font-size="9.5" fill="#8e8e8e" stroke="#8e8e8e" stroke-width=".3" transform="translate(1312.8 0) scale(.9 1) translate(-1312.8 0)">TOP</text>
<text x="1312" y="162" text-anchor="middle" font-family="Liberation Sans" font-size="8" font-weight="bold" fill="#9a9a9a" transform="translate(1312 162) scale(1.05 .5) translate(-1312 -162)">FRONT</text>
<path d="M1293.2 110.6 V119" stroke="#7fd67f" stroke-width="1.2"/>
<text x="1291.3" y="108.3" text-anchor="middle" font-family="Liberation Sans" font-size="10" fill="#86dc86">Y</text>
<path d="M1334.4 137.4 H1337" stroke="#f08a92" stroke-width="1.2"/>
<text x="1341.2" y="141" text-anchor="middle" font-family="Liberation Sans" font-size="10" fill="#f08a92">X</text>
<path d="M1292.4 165.4 V174" stroke="#7878ea" stroke-width="1.4"/>
<text x="1291.3" y="182.6" text-anchor="middle" font-family="Liberation Sans" font-size="10" fill="#8484f0">Z</text>
</svg>
<div id="comments">
  <div class="ptitle" style="left:24.5px;top:5.4px;font-size:10.5px;transform:scaleX(.92);transform-origin:0 0">COMMENTS</div>
  <svg style="left:278px;top:6.5px" width="10" height="10" viewBox="0 0 10 10"><circle cx="5" cy="5" r="4.6" fill="#222"/><path d="M2.2 5 H7.8 M5 2.2 V7.8" stroke="#fff" stroke-width="1.5"/></svg>
  <div class="abs" style="left:294px;top:6px;width:1px;height:11px;background:#555"></div>
  <div class="abs" style="left:296px;top:8px;width:1px;height:8px;background:#999"></div>
</div>
<div id="navbar"><svg style="left:-560px;top:-650px" width="1366" height="728" viewBox="0 0 1366 728">
<defs>
 <linearGradient id="gLens" x1="0" y1="0" x2="1" y2="1"><stop offset="0" stop-color="#f4f8f8"/><stop offset="1" stop-color="#bcd0d2"/></linearGradient>
 <linearGradient id="gGrid" x1="0" y1="0" x2="0" y2="1"><stop offset="0" stop-color="#ffffff"/><stop offset="1" stop-color="#8f9095"/></linearGradient>
</defs>
<!-- orbit -->
<ellipse cx="571.2" cy="662.6" rx="7.4" ry="2.9" fill="none" stroke="#2a2a2a" stroke-width="1.2"/>
<path d="M567.6 662.4 L564 665.3 L567.6 668.2 Z" fill="#2a2a2a" stroke="#f0f0f0" stroke-width=".4"/>
<path d="M571.4 653.8 L574.2 657.6 H572.5 V669.4 H570.3 V657.6 H568.6 Z" fill="#fff" stroke="#2a2a2a" stroke-width="1" stroke-linejoin="round"/>
<path d="M584.2 660.6 h6 l-3 3.6 Z" fill="#222"/>
<!-- look at -->
<path d="M597.6 659.4 L601.4 654.4 L603.4 656.6 L607.6 654.6 L609.6 656.4 V659.4" fill="#8d8d8d" stroke="#4a4a4a" stroke-width="1"/>
<rect x="596.8" y="659.4" width="14.8" height="10" rx="0.8" fill="#fafafa" stroke="#3a3a3a" stroke-width="1.2"/>
<rect x="599.8" y="662.8" width="8.8" height="3.6" fill="#b4b6c2" stroke="#555" stroke-width=".9"/>
<!-- hand -->
<path d="M626.4 669.6 C625 667.4 623.6 665.2 622.6 663.6 C622 662.4 623.4 661.6 624.4 662.6 L626.2 664.6 V657 C626.2 655.6 628 655.6 628.2 657 V655.4 C628.4 654 630.4 654 630.6 655.4 V654.8 C630.8 653.6 632.8 653.6 633 654.8 V656 C633.2 654.8 635.2 654.8 635.4 656.2 V659 C635.6 658 637.4 658 637.4 659.4 V664 C637.4 666.4 636.4 668 635.4 669.6 Z" fill="#fff" stroke="#2a2a2a" stroke-width="1" stroke-linejoin="round"/>
<path d="M628.2 657 V661.6 M630.6 655.4 V661.4 M633 656 V661.6 M635.4 659 V662.4" stroke="#2a2a2a" stroke-width=".9" fill="none"/>
<!-- zoom -->
<path d="M655.6 664.8 L660 668.8" stroke="#333" stroke-width="2.6" stroke-linecap="round"/>
<circle cx="652.6" cy="661.6" r="4.5" fill="url(#gLens)" stroke="#333" stroke-width="1.2"/>
<path d="M659 656.4 H664 M661.5 654 V659 M659 660.2 H664" stroke="#2a2a2a" stroke-width="1" fill="none"/>
<!-- zoom window -->
<rect x="674.4" y="654.6" width="15.2" height="14.8" fill="none" stroke="#2a2a2a" stroke-width="1" stroke-dasharray="2 1.6"/>
<path d="M685 665.4 L689 669" stroke="#333" stroke-width="2.8" stroke-linecap="round"/>
<circle cx="680.8" cy="661" r="6.3" fill="url(#gLens)" stroke="#333" stroke-width="1.2"/>
<path d="M695.2 660.6 h6 l-3 3.6 Z" fill="#222"/>
<!-- display -->
<rect x="715.6" y="654.8" width="14.8" height="12" rx="1" fill="#fafafa" stroke="#3a4252" stroke-width="1.2"/>
<rect x="717.8" y="656.8" width="10.4" height="8" fill="#8fb0dc" stroke="#4a6aa0" stroke-width=".8"/>
<path d="M721 667 H725 V668.4 H726.6 V669.8 H719.4 V668.4 H721 Z" fill="#fafafa" stroke="#3a4252" stroke-width=".9"/>
<path d="M733.4 660.6 h6 l-3 3.6 Z" fill="#222"/>
<!-- grid -->
<rect x="746.4" y="654.6" width="15.2" height="15" rx="0.8" fill="url(#gGrid)" stroke="#555" stroke-width="1.1"/>
<path d="M749.4 654.6 V669.6 M752.5 654.6 V669.6 M755.6 654.6 V669.6 M758.7 654.6 V669.6 M746.4 657.6 H761.6 M746.4 660.6 H761.6 M746.4 663.6 H761.6 M746.4 666.6 H761.6" stroke="#77787d" stroke-width=".9" fill="none"/>
<path d="M764.6 660.6 h6 l-3 3.6 Z" fill="#222"/>
<!-- viewports -->
<rect x="777.2" y="655.4" width="14.6" height="12.4" rx="1" fill="#8fb0dc" stroke="#2f4f8f" stroke-width="1.2"/>
<path d="M784.5 655.4 V667.8 M777.2 661.6 H791.8" stroke="#2f4f8f" stroke-width="1.2"/>
<rect x="779.4" y="657.4" width="3" height="2.2" fill="#b4cbea"/><rect x="786.6" y="657.4" width="3" height="2.2" fill="#b4cbea"/><rect x="779.4" y="663.6" width="3" height="2.2" fill="#b4cbea"/><rect x="786.6" y="663.6" width="3" height="2.2" fill="#b4cbea"/>
<path d="M795.2 660.6 h6 l-3 3.6 Z" fill="#222"/>
</svg></div>
<div id="botline"></div>
<div id="timeline"><svg style="left:0;top:-680px" width="1366" height="728" viewBox="0 0 1366 728">
<g fill="#505050">
 <rect x="10.8" y="697.2" width="1.9" height="13.3"/><path d="M23.2 697.2 V710.5 L12.8 703.85 Z"/>
 <path d="M45.4 697.2 V710.5 L35 703.85 Z"/><rect x="46.1" y="700.8" width="1.9" height="6.2"/>
 <path d="M61.2 696.2 L72.4 703.85 L61.2 711.5 Z"/>
 <rect x="85" y="700.8" width="1.9" height="6.2"/><path d="M87.8 697.2 L98 703.85 L87.8 710.5 Z"/>
 <path d="M111 697.2 L121.2 703.85 L111 710.5 Z"/><rect x="121.2" y="697.2" width="1.9" height="13.3"/>
</g>
<defs><linearGradient id="gTs" x1="0" y1="0" x2="1" y2="1"><stop offset="0" stop-color="#ffffff"/><stop offset="1" stop-color="#a9bfe0"/></linearGradient></defs>
<rect x="146.6" y="695.8" width="14.8" height="14.2" fill="url(#gTs)" stroke="#15152e" stroke-width="1.5"/>
<path d="M149.6 698.4 V707.2 H158.2" stroke="#15152e" stroke-width="1.3" fill="none"/>
<path d="M150.6 706.2 L151.4 703.2 L159.4 694.6 L161.8 696.8 L153.6 705.4 Z" fill="#f6d23c" stroke="#c99a18" stroke-width=".6"/>
<path d="M150.6 706.2 L151.4 703.2 L153.6 705.4 Z" fill="#5a4a3a"/>
<g stroke="#2a3450" stroke-width="1" stroke-linejoin="round">
 <path d="M170.4 699 L173 695.4 H179.4 L177 699 Z" fill="#c8d9ef"/>
 <path d="M177 699 L179.4 695.4 V706.6 L177 710.2 Z" fill="#7f9cc8"/>
 <rect x="170.4" y="699" width="6.6" height="11.2" fill="#a9c3e6"/>
</g>
<path d="M183.2 709.4 V696.6 M181.4 698.8 L183.2 695.8 L185 698.8" stroke="#222" stroke-width="1" fill="none"/>
<path d="M154.8 714.2 V719.6 H178 V714.2" stroke="#cdcdcd" stroke-width="1.5" fill="none"/>
<path d="M184 689.2 H196 V691 L191 696.8 V720.6 H188.9 V696.8 L184 691 Z" fill="#686868"/>
<!-- gear -->
<g transform="translate(1348.6,703.8)">
<path d="M-1.4 -7.6 H1.4 L1.8 -5.6 L3.3 -4.9 L5 -6 L6.8 -4.2 L5.7 -2.5 L6.3 -1.1 L7.8 -0.8 V1.7 L6.3 2 L5.7 3.4 L6.7 5.1 L4.9 6.9 L3.2 5.8 L1.8 6.4 L1.4 7.9 H-1.4 L-1.8 6.4 L-3.3 5.8 L-5 6.8 L-6.8 5 L-5.7 3.3 L-6.3 1.9 L-7.8 1.6 V-0.9 L-6.3 -1.2 L-5.7 -2.6 L-6.8 -4.3 L-5 -6.1 L-3.3 -5 L-1.8 -5.6 Z" fill="#505050"/>
<circle cx="0" cy="0.1" r="3.6" fill="#f4f4f4"/><circle cx="0" cy="0.1" r="2" fill="#505050"/>
</g>
</svg></div>
</body>
</html>
